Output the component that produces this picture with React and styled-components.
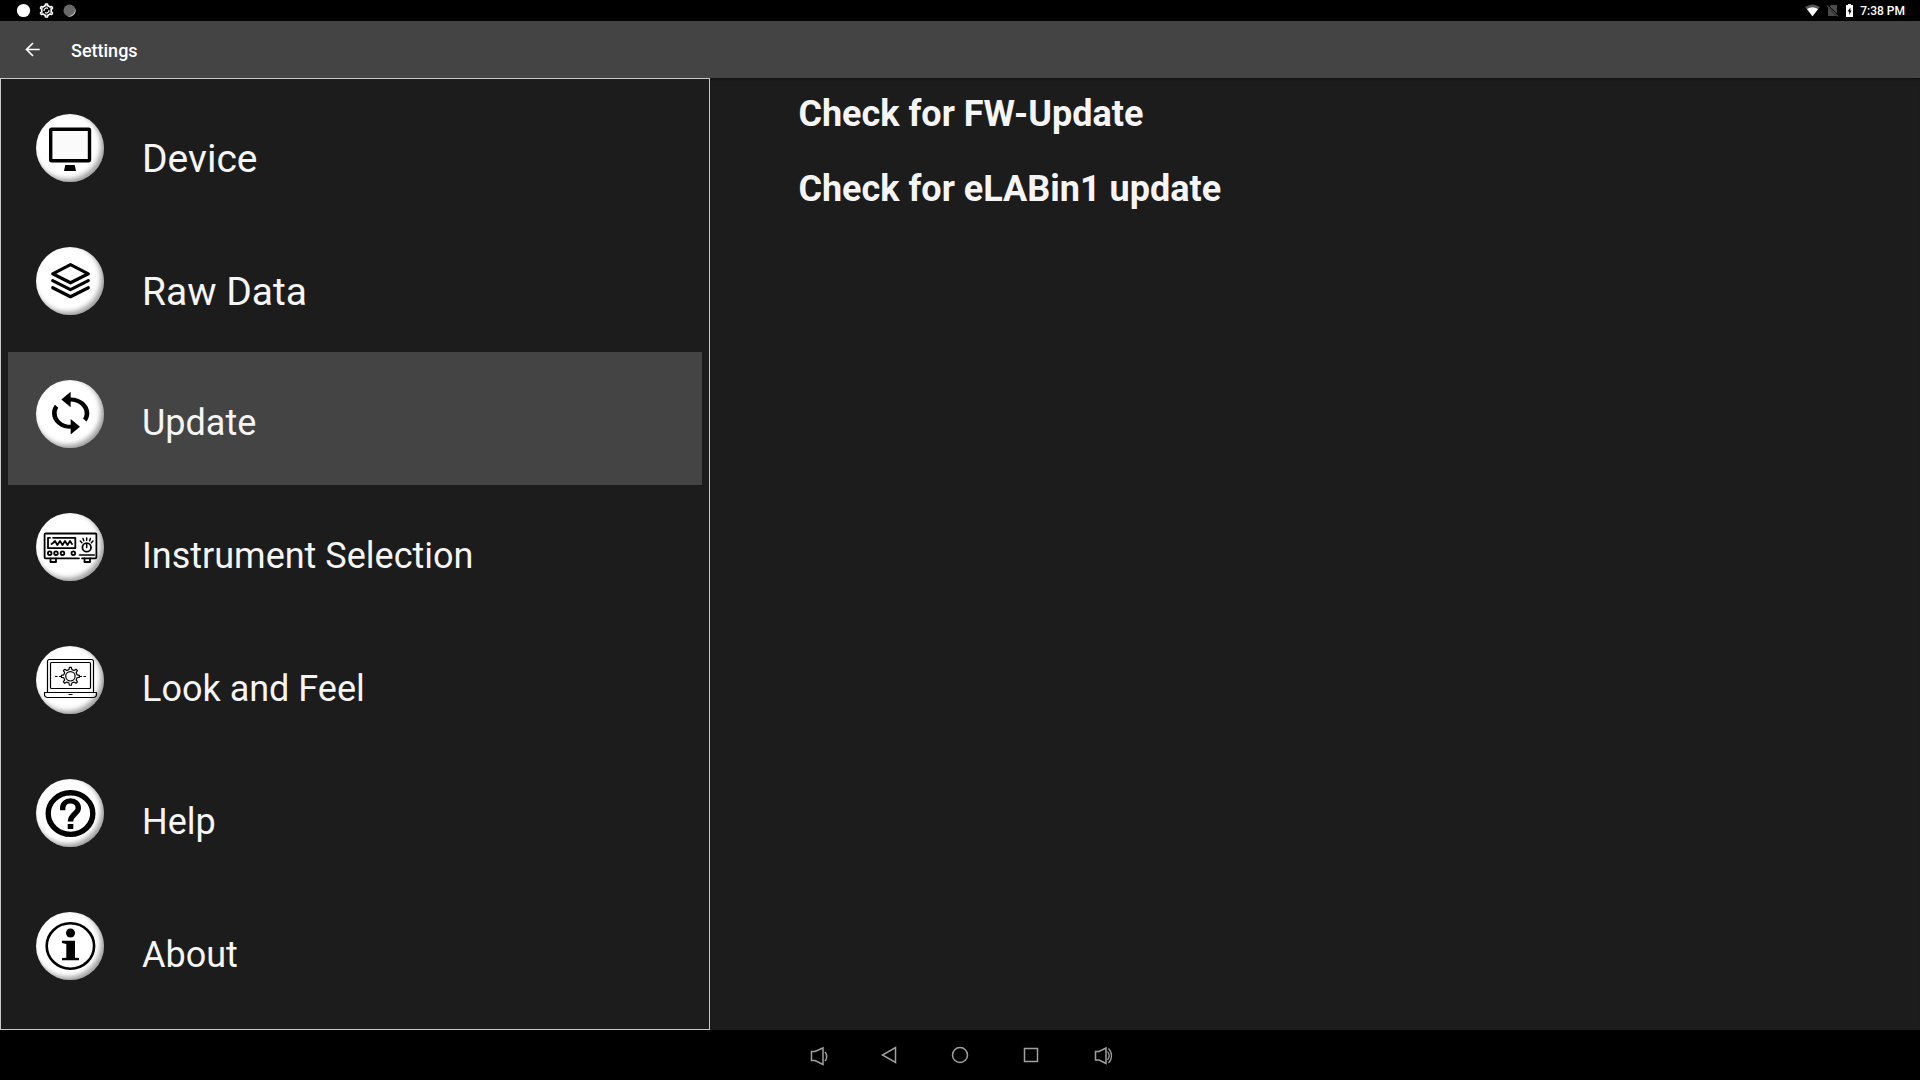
import React, { useState } from "react";
import styled, { createGlobalStyle } from "styled-components";

const GlobalStyle = createGlobalStyle`
  * { box-sizing: border-box; }
  body {
    margin: 0;
    background: #000;
    color: #f5f5f5;
    font-family: Roboto, "Liberation Sans", sans-serif;
  }
  button {
    padding: 0;
    border: 0;
    background: none;
    color: inherit;
    font: inherit;
    text-align: left;
    cursor: pointer;
  }
  svg { display: block; }
`;

const Screen = styled.div`
  display: flex;
  flex-direction: column;
  min-height: 100vh;
`;

const StatusBar = styled.div`
  display: flex;
  align-items: center;
  justify-content: space-between;
  height: 21px;
  padding: 0 15px 0 16px;
  background: #000;
  color: #fff;
`;

const StatusGroup = styled.div`
  display: flex;
  align-items: center;
  gap: ${(p) => p.$gap}px;
`;

const Clock = styled.time`
  font-size: 12px;
  line-height: 20px;
  font-weight: 500;
`;

const AppBar = styled.header`
  display: flex;
  align-items: center;
  gap: 26px;
  height: 57px;
  padding: 0 20px;
  background: #444;
`;

const BackButton = styled.button`
  width: 25px;
  height: 25px;
`;

const Title = styled.h1`
  margin: 0;
  padding-top: 2px;
  font-size: 18px;
  line-height: 24px;
  font-weight: 500;
  color: #fff;
`;

const Main = styled.main`
  display: flex;
  flex: 1;
  background: #1c1c1c;
`;

const Sidebar = styled.nav`
  flex: 0 0 37%;
  padding: 7px 7px 12px;
  border: 1px solid #c8c8c8;
`;

const MenuItem = styled.button`
  display: flex;
  align-items: flex-start;
  gap: 38px;
  width: 100%;
  height: 133px;
  padding: 28px;
  background: ${(p) => (p.$active ? "#444" : "transparent")};
`;

const Badge = styled.span`
  flex: none;
  width: 68px;
  height: 68px;
  border-radius: 50%;
  background: #fff;
  color: #000;
  box-shadow: inset -3px -3px 5px rgba(0, 0, 0, 0.38);
`;

const MenuLabel = styled.span`
  padding-top: 21px;
  font-size: ${(p) => (p.$large ? 39 : 36)}px;
  line-height: ${(p) => (p.$large ? 48 : 44)}px;
  white-space: nowrap;
`;

const Content = styled.section`
  display: flex;
  flex: 1;
  flex-direction: column;
  align-items: flex-start;
  gap: 31px;
  padding: 14px 88px;
  box-shadow: inset 0 3px 3px -2px rgba(0, 0, 0, 0.5);
`;

const Action = styled.button`
  font-size: 36px;
  line-height: 44px;
  font-weight: 700;
`;

const NavBar = styled.footer`
  display: flex;
  align-items: center;
  justify-content: center;
  height: 50px;
  background: #000;
  color: #a0a0a0;
`;

const NavButton = styled.button`
  display: grid;
  place-items: center;
  width: 71px;
  height: 50px;
`;

const Icon = ({ children, size = 68, w = size, h = size, ...rest }) => (
  <svg
    width={w}
    height={h}
    viewBox={`0 0 ${w} ${h}`}
    fill="none"
    stroke="currentColor"
    aria-hidden="true"
    {...rest}
  >
    {children}
  </svg>
);

const gearPath = (cx, cy, outer, inner, teeth) => {
  const points = [];
  const step = (Math.PI * 2) / teeth;
  for (let i = 0; i < teeth; i += 1) {
    const a = i * step - Math.PI / 2;
    [
      [-0.28, inner],
      [-0.14, outer],
      [0.14, outer],
      [0.28, inner],
    ].forEach(([offset, r]) => {
      const angle = a + offset * step;
      points.push(
        `${(cx + r * Math.cos(angle)).toFixed(2)} ${(cy + r * Math.sin(angle)).toFixed(2)}`
      );
    });
  }
  return `M${points.join("L")}Z`;
};

const DeviceIcon = () => (
  <Icon>
    <rect x="14.7" y="15.2" width="38.8" height="31.6" rx="1" fill="#fafafa" strokeWidth="3.4" />
    <path d="M29.3 51h9.4l1.3 6H28z" fill="currentColor" stroke="none" />
  </Icon>
);

const LayersIcon = () => (
  <Icon strokeWidth="3.2" strokeLinejoin="round" strokeLinecap="round">
    <path d="M34.5 17.7 52.3 26.8 34.5 35.8 16.7 26.8Z" />
    <path d="M16.7 33.6 34.5 42.6 52.3 33.6" />
    <path d="M16.7 40.7 34.5 49.7 52.3 40.7" />
  </Icon>
);

const SyncIcon = () => (
  <Icon>
    <path
      transform="translate(6.7 9.75) scale(2.33 1.95)"
      fill="currentColor"
      stroke="none"
      d="M12 4V1L8 5l4 4V6c3.31 0 6 2.69 6 6 0 1.01-.25 1.97-.7 2.8l1.46 1.46C19.54 15.03 20 13.57 20 12c0-4.42-3.58-8-8-8zm0 14c-3.31 0-6-2.69-6-6 0-1.01.25-1.97.7-2.8L5.24 7.74C4.46 8.97 4 10.43 4 12c0 4.42 3.58 8 8 8v3l4-4-4-4v3z"
    />
  </Icon>
);

const InstrumentIcon = () => (
  <Icon strokeWidth="1.8" strokeLinejoin="round" strokeLinecap="round">
    <path d="M43 45.3H9.6a1 1 0 0 1-1-1V21.5a1 1 0 0 1 1-1H59.4a1 1 0 0 1 1 1V44.3a1 1 0 0 1-1 1H46" />
    <path d="M17 24.8H39.3V35.2H12V24.8H14" />
    <path d="M15.5 31 17 30 19 28 21.3 32 24 28 26.5 32 29 28 31.5 32 34 28 36 31" />
    <circle cx="13.7" cy="40.2" r="1.8" />
    <circle cx="20" cy="40.2" r="1.8" />
    <circle cx="26.5" cy="40.2" r="1.8" />
    <circle cx="37.3" cy="40.2" r="1.8" />
    <circle cx="50.7" cy="34.4" r="4.3" />
    <path
      strokeWidth="1.5"
      d="M50.7 31v3.5M50.7 25v2.3M47 25.5l.8 2.2M54.4 25.5l-.8 2.2M44.3 28l1.6 1.7M57 28l-1.6 1.7M43.5 42H58.3"
    />
    <path d="M14.5 45.5V49H20V45.5M48.5 45.5V49H54V45.5" />
  </Icon>
);

const LaptopIcon = () => (
  <Icon strokeWidth="1.2" strokeLinejoin="round">
    <path d="M11.5 46V15.5a2 2 0 0 1 2-2H55.500a2 2 0 0 1 2 2V46" />
    <rect x="14.5" y="16.5" width="40" height="26" rx="1" />
    <path d="M8.5 46.5H60.5V48.5a3 3 0 0 1-3 3H11.5a3 3 0 0 1-3-3Z" />
    <path d="M32.5 48.5h4M19 30.500h2.5M23 30.5h2.5M43.5 30.5h2.5M47.5 30.5h2.5" />
    <path d={gearPath(34.4, 30.3, 9, 6.8, 8)} />
    <circle cx="34.4" cy="30.3" r="4.7" />
  </Icon>
);

const HelpIcon = () => (
  <Icon>
    <ellipse cx="34.5" cy="34.6" rx="22.3" ry="20.8" strokeWidth="5.4" />
    <path
      d="M26.7 31.3V29.5C26.7 25 30 21.9 34.5 21.9S42.3 25 42.3 29.2C42.3 34.5 34.5 35.2 34.5 42.5"
      strokeWidth="5.4"
    />
    <rect x="31.7" y="45" width="5.6" height="5" fill="currentColor" stroke="none" />
  </Icon>
);

const AboutIcon = () => (
  <Icon>
    <ellipse cx="34.4" cy="34" rx="23.7" ry="22.7" strokeWidth="2.6" />
    <circle cx="34.5" cy="21" r="4.5" fill="currentColor" stroke="none" />
    <path
      d="M26 28.7H39V45.8L43 46V48.3H26V46L30.3 45.8V32L26 31Z"
      fill="currentColor"
      stroke="none"
    />
  </Icon>
);

const MENU = [
  { id: "device", label: "Device", Glyph: DeviceIcon, large: true },
  { id: "raw", label: "Raw Data", Glyph: LayersIcon, large: true },
  { id: "update", label: "Update", Glyph: SyncIcon },
  { id: "instrument", label: "Instrument Selection", Glyph: InstrumentIcon },
  { id: "look", label: "Look and Feel", Glyph: LaptopIcon },
  { id: "help", label: "Help", Glyph: HelpIcon },
  { id: "about", label: "About", Glyph: AboutIcon },
];

const NAV = [
  {
    label: "Volume down",
    art: (
      <>
        <path d="M5.500 8.500H9L17 5V21.500L9 17.500H5.500Z" />
        <path d="M19 9c2.300 2.500 2.300 6.500 0 9" />
      </>
    ),
  },
  { label: "Back", art: <path d="M18.500 4.500V19.500L5.500 12Z" /> },
  { label: "Home", art: <circle cx="12" cy="12" r="7.5" /> },
  { label: "Recent apps", art: <rect x="5.5" y="5.5" width="13" height="13" /> },
  {
    label: "Volume up",
    art: (
      <>
        <path d="M5.500 8.500H9L16 5V20.500L9 17H5.500Z" />
        <path strokeWidth="1.2" d="M17.500 8.500c2 2.500 2 6 0 8.500M18.500 5.500c4 4 4 10.500 0 14.500" />
      </>
    ),
  },
];

export default function App() {
  const [active, setActive] = useState("update");

  return (
    <>
      <GlobalStyle />
      <Screen>
        <StatusBar>
          <StatusGroup $gap={8}>
            <Icon size={15} stroke="none">
              <circle cx="7.5" cy="7.5" r="6.6" fill="#fff" />
            </Icon>
            <Icon size={15} stroke="#fff" strokeLinejoin="round">
              <path d={gearPath(7.5, 7.5, 6.6, 5, 6)} strokeWidth="1.5" />
              <circle cx="7.5" cy="7.5" r="4.8" strokeWidth="1" />
              <path d="M5 8a2.600 2.600 0 0 1 4-2.600M10 7a2.600 2.600 0 0 1-4 2.600" strokeWidth="1.2" />
            </Icon>
            <Icon size={15} stroke="none">
              <circle cx="7.5" cy="7.5" r="6" fill="#686868" />
              <path d="M13 5A6 6 0 0 1 5 13a7 7 0 0 0 8-8z" fill="#bbb" />
            </Icon>
          </StatusGroup>
          <StatusGroup $gap={7}>
            <Icon w={15} h={13} stroke="none">
              <path d="M0 3Q7.500-2 15 3L7.500 12.500Z" fill="#555" />
              <path d="M2 5Q7.500 1.500 13 5L7.500 12.300Z" fill="#fff" />
            </Icon>
            <Icon w={12} h={13} stroke="none">
              <path d="M4 1H10V12H1V4Z" fill="#4a4a4a" />
              <path d="M.5 1.500 11 12.300" stroke="#000" strokeWidth="2" />
              <path d="M0 1.500 11 12.500" stroke="#777" strokeWidth="1" />
            </Icon>
            <Icon w={7} h={13} stroke="none">
              <path d="M2 0H5V1H7V13H0V1H2Z" fill="#fff" />
              <path d="M4.500 3.500 1.500 7.500H3.200V11L5.700 6.500H4.300Z" fill="#000" />
            </Icon>
            <Clock>7:38 PM</Clock>
          </StatusGroup>
        </StatusBar>

        <AppBar>
          <BackButton type="button" aria-label="Navigate up">
            <Icon size={25} stroke="#fff" strokeWidth="1.7">
              <path d="M19.700 12.500H7M13 6 6.500 12.500 13 19" />
            </Icon>
          </BackButton>
          <Title>Settings</Title>
        </AppBar>

        <Main>
          <Sidebar aria-label="Settings">
            {MENU.map(({ id, label, Glyph, large }) => (
              <MenuItem
                key={id}
                type="button"
                $active={id === active}
                aria-current={id === active ? "page" : undefined}
                onClick={() => setActive(id)}
              >
                <Badge>
                  <Glyph />
                </Badge>
                <MenuLabel $large={large}>{label}</MenuLabel>
              </MenuItem>
            ))}
          </Sidebar>
          <Content>
            <Action type="button">Check for FW-Update</Action>
            <Action type="button">Check for eLABin1 update</Action>
          </Content>
        </Main>

        <NavBar>
          {NAV.map(({ label, art }) => (
            <NavButton key={label} type="button" aria-label={label}>
              <Icon size={24} strokeWidth="1.5">
                {art}
              </Icon>
            </NavButton>
          ))}
        </NavBar>
      </Screen>
    </>
  );
}
